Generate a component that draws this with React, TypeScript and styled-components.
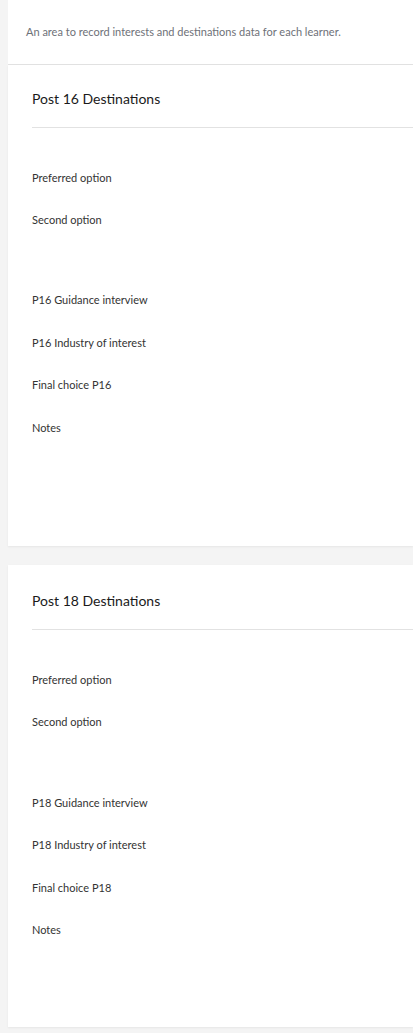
import React from "react";
import styled, { createGlobalStyle } from "styled-components";

const GlobalStyle = createGlobalStyle`
  html, body {
    margin: 0;
    padding: 0;
    background: #f4f4f4;
    font-family: Lato, "Open Sans", "Liberation Sans", sans-serif;
    overflow-x: hidden;
  }
`;

type Section = {
  title: string;
  first: string[];
  second: string[];
};

const SECTIONS: Section[] = [
  {
    title: "Post 16 Destinations",
    first: ["Preferred option", "Second option"],
    second: [
      "P16 Guidance interview",
      "P16 Industry of interest",
      "Final choice P16",
      "Notes"
    ]
  },
  {
    title: "Post 18 Destinations",
    first: ["Preferred option", "Second option"],
    second: [
      "P18 Guidance interview",
      "P18 Industry of interest",
      "Final choice P18",
      "Notes"
    ]
  }
];

const App = () => {
  return (
    <>
      <GlobalStyle />
      <StyledPage>
        <StyledIntro>
          An area to record interests and destinations data for each learner.
        </StyledIntro>
        {SECTIONS.map((section, i) => (
          <StyledCard key={section.title} $first={i === 0}>
            <StyledCardTitle>{section.title}</StyledCardTitle>
            <StyledFieldGroup>
              {section.first.map(label => (
                <StyledFieldRow key={label}>{label}</StyledFieldRow>
              ))}
            </StyledFieldGroup>
            <StyledFieldGroup $spaced>
              {section.second.map(label => (
                <StyledFieldRow key={label}>{label}</StyledFieldRow>
              ))}
            </StyledFieldGroup>
          </StyledCard>
        ))}
      </StyledPage>
    </>
  );
};

export default App;

const StyledPage = styled.div`
  padding-left: 8px;
  padding-bottom: 6px;
  display: flex;
  flex-direction: column;
`;

const StyledIntro = styled.div`
  background: #fff;
  height: 65px;
  box-sizing: border-box;
  padding: 25px 0 0 18px;
  font-size: 11px;
  line-height: 14px;
  color: #6e7178;
  border-bottom: 1px solid #e2e2e2;
`;

const StyledCard = styled.div<{ $first?: boolean }>`
  background: #fff;
  padding: ${p => (p.$first ? "24px 0 98px 24px" : "26px 0 76px 24px")};
  margin-bottom: ${p => (p.$first ? "19px" : "0")};
  box-shadow: 0 1px 2px rgba(0, 0, 0, 0.06);
`;

const StyledCardTitle = styled.div`
  font-size: 14px;
  line-height: 20px;
  color: #1a1a1a;
  padding-bottom: 18px;
  border-bottom: 1px solid #e2e2e2;
  margin-bottom: 28px;
`;

const StyledFieldGroup = styled.div<{ $spaced?: boolean }>`
  display: flex;
  flex-direction: column;
  margin-top: ${p => (p.$spaced ? "38px" : "0")};
`;

const StyledFieldRow = styled.div`
  height: 42.4px;
  display: flex;
  align-items: center;
  font-size: 11px;
  color: #333;
`;
